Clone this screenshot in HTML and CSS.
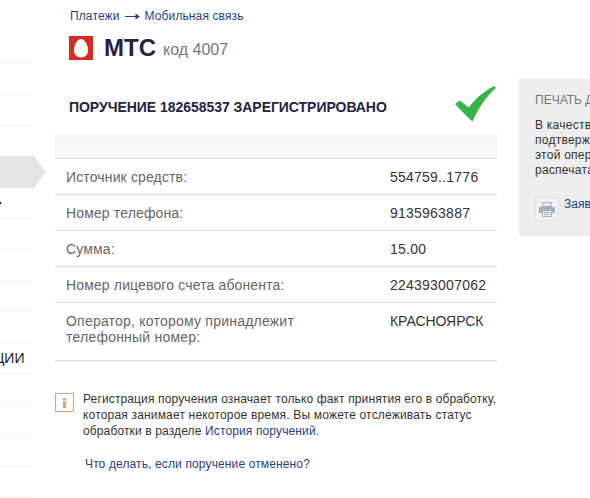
FILE: index.html
```html
<!DOCTYPE html>
<html lang="ru">
<head>
  <meta charset="UTF-8">
  <title>МТС - Мобильная связь</title>
  <link rel="stylesheet" href="styles.css">
</head>
<body>
  <div class="page">
    <ul class="menu">
      <li></li>
      <li></li>
      <li></li>
      <li></li>
      <li class="active"></li>
      <li class="edge">.</li>
      <li></li>
      <li></li>
      <li></li>
      <li></li>
      <li class="cut">ции</li>
      <li></li>
      <li></li>
      <li></li>
      <li></li>
    </ul>

    <div class="content">
      <div class="breadcrumbs">
        <a href="#">Платежи</a>
        <svg class="arrow" width="15" height="7" viewBox="0 0 15 7"><path d="M0 3.5H12" stroke="#24428a"/><path d="M10.5 0.5L15 3.5L10.5 6.5Z" fill="#24428a"/></svg>
        <a href="#">Мобильная связь</a>
      </div>

      <div class="title">
        <svg class="logo" width="24" height="24" viewBox="0 0 24 24"><rect width="24" height="24" fill="#d52b22"/><path d="M12 3C8.2 3 5 9 5 14C5 18.7 7.8 21.5 12 21.5S19 18.7 19 14C19 9 15.8 3 12 3Z" fill="#fff"/></svg>
        <h1>МТС</h1>
        <span class="code">код 4007</span>
      </div>

      <div class="status">
        <h2>ПОРУЧЕНИЕ 182658537 ЗАРЕГИСТРИРОВАНО</h2>
        <svg class="check" width="41" height="36" viewBox="0 0 41 36"><path d="M0 18L4.5 14.5L14 21.5C20 13 29 5 38.5 0.5C40 0 41 1 40.5 2.5C31 11 23.5 22 17.5 35.5L15 33.5Z" fill="#35b449"/></svg>
      </div>

      <div class="details">
        <div class="details-head"></div>
        <div class="row"><div class="name">Источник средств:</div><div class="value">554759..1776</div></div>
        <div class="row"><div class="name">Номер телефона:</div><div class="value">9135963887</div></div>
        <div class="row"><div class="name">Сумма:</div><div class="value">15.00</div></div>
        <div class="row"><div class="name">Номер лицевого счета абонента:</div><div class="value">224393007062</div></div>
        <div class="row last"><div class="name operator">Оператор, которому принадлежит<br>телефонный номер:</div><div class="value city">КРАСНОЯРСК</div></div>
      </div>

      <div class="note">
        <svg class="info" width="19" height="19" viewBox="0 0 19 19"><rect x="0.5" y="0.5" width="18" height="18" fill="#fffdf9" stroke="#e0a36d"/><path d="M8 5h3v2H8zM8 8h3v7H8z" fill="#e8a066"/></svg>
        <div class="note-text">
          <p>Регистрация поручения означает только факт принятия его в обработку,<br>
            <span class="wide">которая занимает некоторое время. Вы можете отслеживать статус</span><br>
            обработки в разделе <a href="#">История поручений.</a>
          </p>
          <a href="#" class="help">Что делать, если поручение отменено?</a>
        </div>
      </div>
    </div>

    <div class="print">
      <h3>ПЕЧАТЬ ДОКУМЕНТОВ</h3>
      <p>В качестве<br>подтверждения<br>этой операции<br>распечатать</p>
      <div class="print-link">
        <svg width="24" height="24" viewBox="0 0 24 24"><rect x="0.5" y="0.5" width="23" height="23" fill="#f1f1f1" stroke="#e2e2e2"/><path d="M7.5 5.5h9v4h-9z" fill="#e6e9ef" stroke="#a3aec3"/><path d="M5 10h14q1 0 1 1v5h-3v-2H7v2H4v-5q0-1 1-1z" fill="#a3aec3"/><path d="M7.5 13.5h9v6h-9z" fill="#f4f5f7" stroke="#a3aec3"/><path d="M9 15.5h6M9 17.5h6" stroke="#a3aec3"/></svg>
        <a href="#">Заявление</a>
      </div>
    </div>
  </div>
</body>
</html>
```
FILE: styles.css
```css
body {
  margin: 0;
  background: #fff;
  font-family: "Liberation Sans", Arial, sans-serif;
  font-size: 12px;
  color: #333;
  overflow: hidden;
}

h1, h2, h3, p, ul {
  margin: 0;
  padding: 0;
}

svg {
  display: block;
  flex-shrink: 0;
}

a {
  color: #283f7f;
  text-decoration: none;
}

.page {
  display: flex;
  align-items: flex-start;
  width: 590px;
  height: 498px;
  overflow: hidden;
}

/* left menu */
.menu {
  width: 55px;
  padding-top: 33px;
  list-style: none;
  flex-shrink: 0;
}

.menu li {
  box-sizing: border-box;
  width: 32px;
  height: 31px;
  border-bottom: 1px solid #f3f3f3;
  line-height: 30px;
  font-size: 15px;
  color: #222;
}

.menu .active {
  width: 46px;
  height: 32px;
  margin-top: -1px;
  border: 0;
  background: #e3e3e3;
  clip-path: polygon(0 0, 34px 0, 100% 50%, 34px 100%, 0 100%);
}

.menu .edge {
  text-indent: -2px;
  line-height: 21px;
  font-weight: bold;
}

.menu .cut {
  text-indent: -6px;
  text-transform: uppercase;
  line-height: 31px;
  font-size: 14px;
}

/* payment */
.content {
  width: 442px;
  flex-shrink: 0;
}

.breadcrumbs {
  display: flex;
  align-items: center;
  height: 16px;
  padding: 8px 0 0 15px;
  gap: 5px;
  letter-spacing: 0.12px;
}

.title {
  display: flex;
  align-items: center;
  height: 24px;
  padding: 12px 0 0 14px;
}

h1 {
  margin-left: 11px;
  font-size: 24px;
  line-height: 24px;
  color: #23233f;
}

.code {
  margin: 3px 0 0 7px;
  font-size: 16px;
  line-height: 20px;
  color: #777;
}

.status {
  display: flex;
  justify-content: space-between;
  height: 48px;
  padding: 26px 0 0 14px;
}

h2 {
  padding-top: 13px;
  font-size: 14px;
  line-height: 16px;
  letter-spacing: -0.04px;
  color: #23233f;
}

.check {
  margin-right: 1px;
}

.details-head {
  height: 24px;
  background: linear-gradient(#f5f5f5, #fafafa);
  border-bottom: 1px solid #dedede;
}

.row {
  display: flex;
  box-sizing: border-box;
  height: 36px;
  padding: 10px 0 0 11px;
  border-bottom: 1px solid #dedede;
  font-size: 14px;
  line-height: 16px;
}

.row.last {
  height: 58px;
}

.name {
  width: 324px;
  letter-spacing: 0.14px;
  color: #666;
}

.operator {
  letter-spacing: 0.22px;
}

.value {
  letter-spacing: 0.23px;
}

.city {
  letter-spacing: -0.05px;
}

.note {
  display: flex;
  padding-top: 31px;
}

.info {
  margin-top: 1px;
}

.note-text {
  padding-left: 9px;
  line-height: 16px;
  letter-spacing: 0.13px;
  white-space: nowrap;
}

.note-text p {
  margin-top: -1px;
}

.wide {
  letter-spacing: 0.18px;
}

.help {
  display: block;
  margin: 17px 0 0 2px;
}

/* print box */
.print {
  box-sizing: border-box;
  width: 200px;
  height: 157px;
  margin: 79px 0 0 22px;
  padding: 13px 0 0 16px;
  background: #eee;
  flex-shrink: 0;
}

h3 {
  font-size: 12px;
  line-height: 16px;
  font-weight: normal;
  color: #777;
}

.print p {
  margin-top: 10px;
  line-height: 15px;
  letter-spacing: 0.25px;
}

.print-link {
  display: flex;
  gap: 5px;
  padding-top: 19px;
}
```
